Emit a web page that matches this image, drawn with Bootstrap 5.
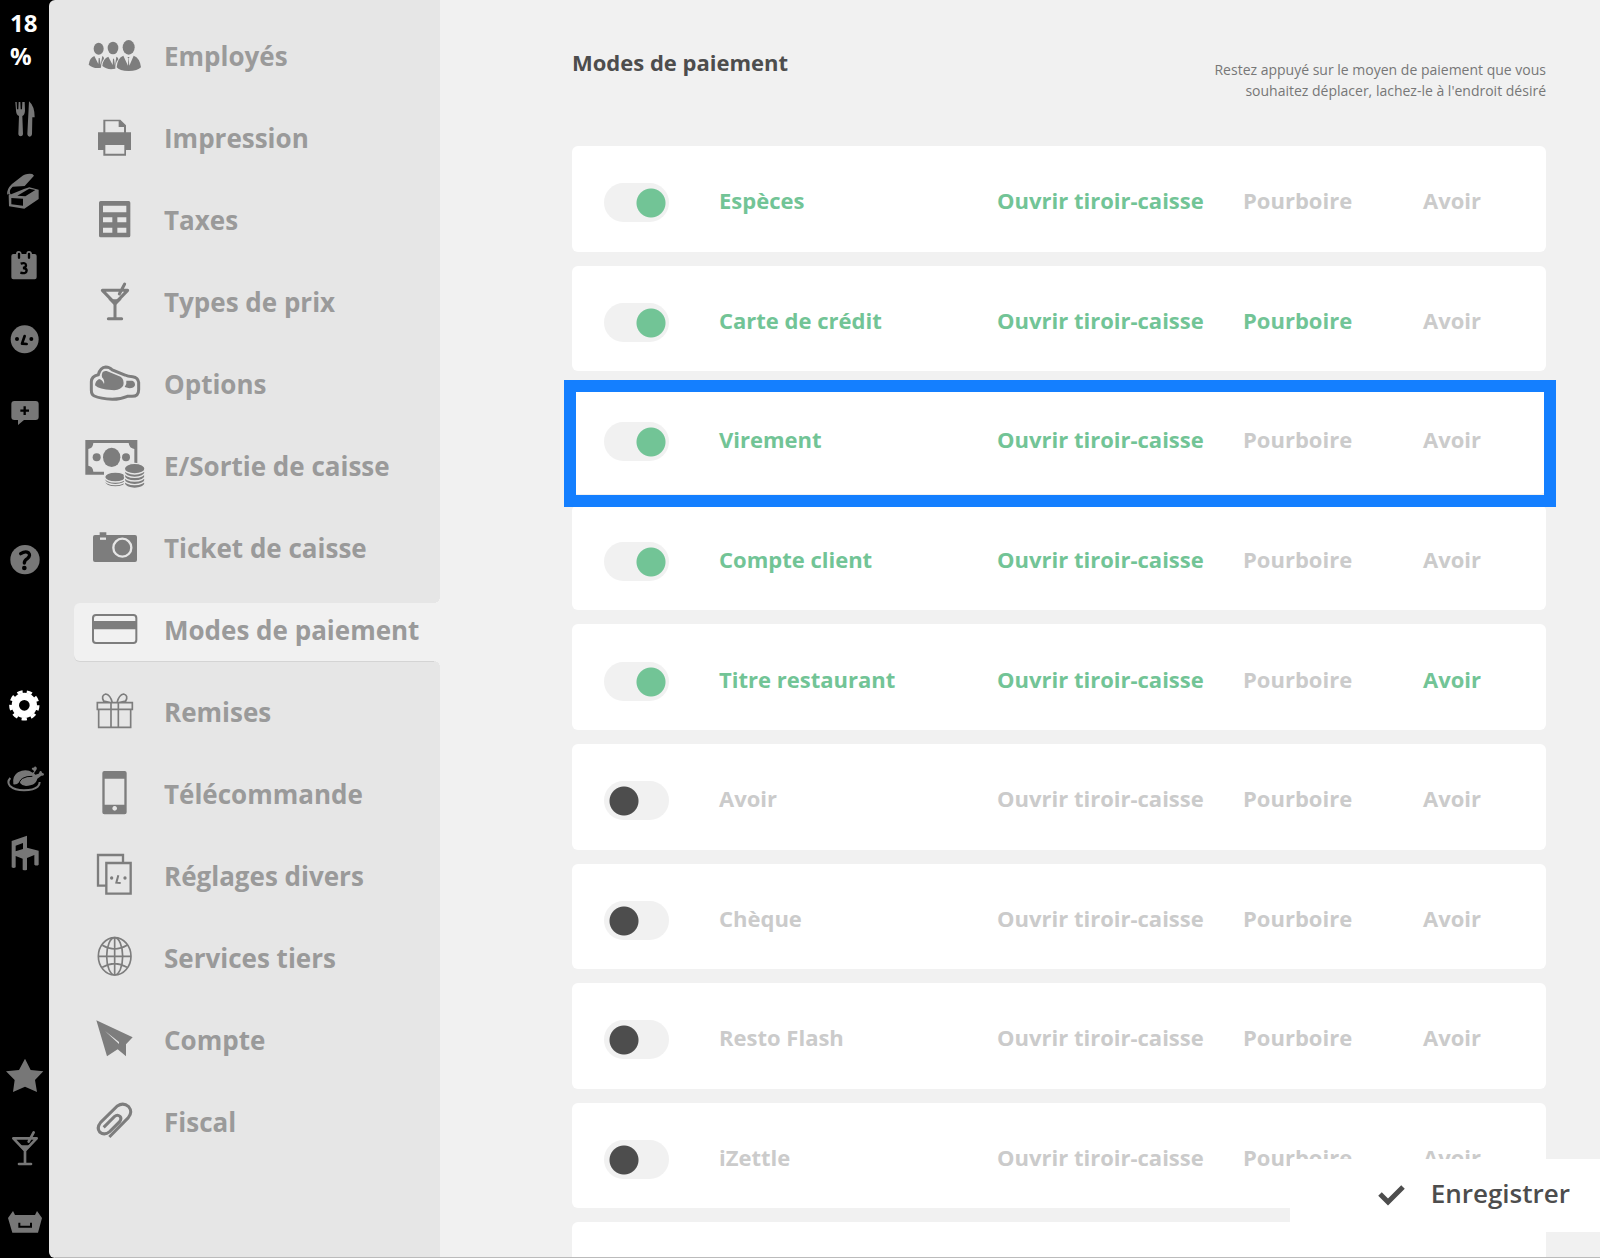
<!DOCTYPE html>
<html lang="fr">
<head>
<meta charset="utf-8">
<meta name="viewport" content="width=device-width, initial-scale=1">
<title>Modes de paiement</title>
<link href="https://cdn.jsdelivr.net/npm/bootstrap@5.3.0/dist/css/bootstrap.min.css" rel="stylesheet">
<style>
  :root { --ink: #4d4d4d; --icon: #7d7d7d; --label: #9a9a9a; --panel: #e6e6e6; --page: #f1f1f1; --on: #72c496; --off: #cbcbcb; }
  body { font-family: "Open Sans", "Noto Sans", sans-serif; background: #000; color: var(--ink); }
  .rail { width: 49px; color: #777; }
  .rail a { color: inherit; }
  .rail-usage { height: 82px; padding: 6px 8px 0 10px; font-size: 24px; line-height: 33px; font-weight: 700; }
  .rail-main { height: 808px; }
  .rail-main > * { flex: 1 1 0; }
  .rail-foot > * { height: 73px; }
  .rail svg { width: 49px; height: 40px; fill: currentColor; }
  .side { width: 391px; background: var(--panel); padding: 29px 0 0 25px; border-radius: 6px 0 0 6px; }
  .side ul { gap: 24px; }
  .side a { height: 58px; padding-left: 11px; gap: 19px; color: var(--label); font-size: 26px; line-height: 36px; font-weight: 700; border-radius: 6px 0 0 6px; white-space: nowrap; }
  .side a span { padding-bottom: 4px; }
  .side svg { width: 60px; height: 58px; fill: var(--icon); stroke: none; color: var(--icon); }
  .side a.active { background: var(--page); box-shadow: 0 1px 0 #d4d4d4; position: relative; }
  .side a.active::before, .side a.active::after { content: ""; position: absolute; right: 0; width: 6px; height: 6px; }
  .side a.active::before { top: -6px; background: radial-gradient(circle at 0 0, var(--panel) 6px, var(--page) 6px); }
  .side a.active::after { bottom: -6px; background: radial-gradient(circle at 0 100%, var(--panel) 6px, var(--page) 6px); }
  .content-pane { background: var(--page); padding: 0 54px 0 132px; }
  .pane-head { height: 146px; padding-top: 47px; }
  .pane-head h1 { font-size: 22px; line-height: 30px; font-weight: 700; }
  .pane-head p { width: 352px; padding-top: 12px; font-size: 14px; line-height: 21px; color: #777; text-align: right; }
  .pay-list { height: 1182px; gap: 14px; }
  .pay-row { flex: 1 1 0; background: #fff; border-radius: 6px; padding: 8px 0 0 32px; position: relative; font-size: 22px; line-height: 30px; font-weight: 700; color: var(--off); }
  .pay-row .form-check { width: 115px; min-height: 0; padding: 0; margin: 0; }
  .pay-row .form-check-input { display: block; float: none; margin: 0; width: 65px; height: 39px; border: 0; border-radius: 20px; background: var(--page) radial-gradient(circle, var(--ink) 14px, transparent 15px) no-repeat 5px 5px / 30px 30px; }
  .pay-row .form-check-input:checked { background-color: var(--page); background-image: radial-gradient(circle, var(--on) 14px, transparent 15px); background-position: 32px 5px; }
  .pay-row label { padding-bottom: 5px; }
  .pay-row .btn { border: 0; padding: 0 0 5px; font: inherit; color: var(--off); text-align: left; white-space: nowrap; }
  .pay-row .is-on, .pay-row .btn.is-on { color: var(--on); }
  .opt-drawer { width: 246px; } .opt-tip { width: 180px; } .opt-credit { width: 123px; }
  .pay-row.picked { box-shadow: 0 3px 0 #fff; z-index: 1; }
  .picked-frame { position: absolute; inset: -5px -10px -16px -8px; border: 12px solid #147fff; pointer-events: none; }
  .save-btn { position: absolute; right: 0; bottom: 26px; z-index: 2; width: 310px; height: 73px; background: #fff; border: 0; border-radius: 0; padding: 0 30px 5px 0; gap: 24px; color: var(--ink); font-size: 26px; line-height: 36px; font-weight: 600; }
  .save-btn svg { margin-top: 4px; }
  .base-line { height: 1px; background: #bbb; left: 55px; }
</style>
</head>
<body>
<div class="d-flex vh-100 overflow-hidden position-relative">

  <nav class="rail d-flex flex-column flex-shrink-0" aria-label="Navigation principale">
    <div class="rail-usage text-white">18 %</div>
    <div class="rail-main d-flex flex-column">
      <a href="#" class="d-flex align-items-center" aria-label="Restaurant"><svg viewBox="0 296 147 120"><path d="M46 305h4l1 22h4l1-22h5l1 22h4l1-22h5l2 0 1 25q0 14-8 17l2 55q-1 6-7 6t-7-6l2-55q-9-3-9-17zM87 303q17 14 17 48h-7l-1 51q-1 7-7 7t-7-7z"/></svg></a>
      <a href="#" class="d-flex align-items-center" aria-label="Caisse"><svg viewBox="0 517 147 120"><path d="M35 554l28-22q14-12 34-9l5 5-28 31-36 2q-14 12-5 25l-1 5q-14-18 3-37z"/><path d="M24 584q-1-16 12-27" fill="none" stroke="currentColor" stroke-width="5"/><path d="M72 568l16-5 28 7v28l-43 29-46-7-1-33zm9 3-29 17 24 2 30-19-18-4zM34 595v19l35 4v-21z" fill-rule="evenodd"/></svg></a>
      <a href="#" class="d-flex align-items-center" aria-label="Calendrier"><svg viewBox="0 17 147 120"><path d="M40 41h8q0-9 8-9 8 0 9 9h14q0-9 8-9 8 0 9 9h8q6 0 6 6v64q0 6-6 6H40q-6 0-6-6V47q0-6 6-6z"/><path d="M57 41v11M87 41v11" stroke="#000" stroke-width="7" stroke-linecap="round"/><path d="M62 70q15-5 16 5 0 7-9 8 11 1 11 8-1 11-19 6" fill="none" stroke="#000" stroke-width="7"/></svg></a>
      <a href="#" class="d-flex align-items-center" aria-label="Clients"><svg viewBox="0 237 147 120"><circle cx="74" cy="298" r="42"/><g fill="#000"><circle cx="51" cy="297" r="6"/><circle cx="94" cy="297" r="6"/></g><path d="M74 288l-8 23 14 1" fill="none" stroke="#000" stroke-width="8" stroke-linecap="round" stroke-linejoin="round"/></svg></a>
      <a href="#" class="d-flex align-items-center" aria-label="Messages"><svg viewBox="0 458 147 120"><path d="M43 482h64q9 0 9 9v39q0 9-9 9H72l-18 15v-15H43q-9 0-9-9v-39q0-9 9-9z"/><path d="M74 498v26M61 511h26" stroke="#000" stroke-width="7"/></svg></a>
      <span></span>
      <a href="#" class="d-flex align-items-center" aria-label="Aide"><svg viewBox="0 358 147 120"><circle cx="75" cy="420" r="44"/><path d="M62 402q14-9 23-3 8 8-2 17-10 6-10 14" fill="none" stroke="#000" stroke-width="10" stroke-linecap="round"/><circle cx="73" cy="445" r="7" fill="#000"/></svg></a>
      <span></span>
      <a href="#" class="d-flex align-items-center text-white" aria-label="Réglages" aria-current="page"><svg viewBox="0 19 147 120"><circle cx="73" cy="77" r="27" fill="none" stroke="#fff" stroke-width="22"/><circle cx="73" cy="77" r="41" fill="none" stroke="#fff" stroke-width="9" stroke-dasharray="16 12.620" stroke-dashoffset="1"/></svg></a>
      <a href="#" class="d-flex align-items-center" aria-label="Plats"><svg viewBox="0 239 147 120"><path d="M40 312q-4-25 14-36 24-13 44 1l5-4-8-7q1-6 7-4 1-5 6-3 4 3 2 8l-8 12 4 4 10-3 4-8q6-1 6 5 7 1 6 6-2 4-8 3l-12 9q-3 15-21 20-22 6-30-6-2-3-2-5-8 10-19 8z"/><path d="M60 317q-6-14 8-23 12-7 29-6" fill="none" stroke="#000" stroke-width="3"/><path d="M31 293q-11 12-1 24 14 13 42 13 30-1 41-11 6-5 6-14" fill="none" stroke="currentColor" stroke-width="6"/></svg></a>
      <a href="#" class="d-flex align-items-center" aria-label="Tables"><svg viewBox="0 460 147 120"><path d="M35 484l46-16v36l35 9v42q-6 5-13 0v-29l-22 9v35q-6 4-13 0v-33l-21-8v34q-6 4-12 0zM47 498v17l22-7v-18z" fill-rule="evenodd"/></svg></a>
    </div>
    <div class="rail-foot d-flex flex-column mt-auto">
      <a href="#" class="d-flex align-items-center" aria-label="Favoris"><svg viewBox="0 406 147 120"><path d="M75 414l17 34 38 4-25 26 6 36-36-16-36 16 5-36-26-26 39-4z"/></svg></a>
      <a href="#" class="d-flex align-items-center" aria-label="Bar"><svg viewBox="0 625 147 120"><path d="M40 653h70L75 690zM75 690v38M57 730h36M86 663l15-28" fill="none" stroke="currentColor" stroke-width="8" stroke-linejoin="round" stroke-linecap="round"/><path d="M56 674h38l-19 20z"/></svg></a>
      <a href="#" class="d-flex align-items-center" aria-label="Tiroir"><svg viewBox="0 844 147 120"><path d="M39 871l6 12h60l6-12 15 21-12 44H37l-13-44z"/><path d="M58 906v12h35v-12" fill="none" stroke="#000" stroke-width="6"/></svg></a>
    </div>
  </nav>

  <nav class="side flex-shrink-0" aria-label="Réglages">
    <ul class="nav flex-column flex-nowrap">
      <li><a href="#" class="d-flex align-items-center text-decoration-none"><svg viewBox="255 87 180 174"><ellipse cx="296" cy="146" rx="15" ry="18"/><ellipse cx="339" cy="144" rx="16" ry="19"/><ellipse cx="386" cy="142" rx="18" ry="22"/><path d="M266 194q3-21 17-26l12 24 1-18 3 0 3 21 5-27q5 2 5 8-9 11-9 27-21 5-37-9z"/><path d="M307 198q2-23 18-28l13 25 1-19 3 0 3 21 4-27q6 2 6 8-10 11-9 28-24 5-39-8z"/><path d="M350 202q2-28 20-35l14 30 1-22-3-4h7l-3 4 2 22 13-30q19 7 22 35-10 11-37 11-28 0-36-11z"/></svg><span>Employés</span></a></li>
      <li><a href="#" class="d-flex align-items-center text-decoration-none"><svg viewBox="255 333 180 174"><path d="M310 359h51l17 17v21h15v53h-15v17h-68v-17h-16v-53h16zm6 5v33h56v-16h-16v-17zm0 71v26h57v-26z" fill-rule="evenodd"/></svg><span>Impression</span></a></li>
      <li><a href="#" class="d-flex align-items-center text-decoration-none"><svg viewBox="255 579 180 174"><path d="M302 603h84q5 0 5 5v99q0 5-5 5h-84q-5 0-5-5v-99q0-5 5-5zm7 14v20h70v-20zm0 35v15h28v-15zm43 0v15h27v-15zm-43 31v15h28v-15zm43 0v15h27v-15z" fill-rule="evenodd"/></svg><span>Taxes</span></a></li>
      <li><a href="#" class="d-flex align-items-center text-decoration-none"><svg viewBox="255 105 180 174"><path d="M307 151h76l-38 39zM345 190v44M325 236h40M358 162l16-30" fill="none" stroke="currentColor" stroke-width="9" stroke-linejoin="round" stroke-linecap="round"/><path d="M325 178h40l-20 20z"/></svg><span>Types de prix</span></a></li>
      <li><a href="#" class="d-flex align-items-center text-decoration-none"><svg viewBox="255 351 180 174"><path d="M274 425q0-16 21-21 6-22 22-23 12 0 20 9l38 15q8 4 23 5 16 2 18 17v22q0 20-20 20h-14q-20 9-45 9-36-2-54-10-9-4-9-18z" fill="none" stroke="currentColor" stroke-width="9"/><path d="M306 412Q303 390 320 393L362 410Q373 417 370 436 362 453 335 450 298 449 285 436 286 423 297 417 307 419 312 432 315 421 306 412zM379 422h18q9 4 8 14-3 9-17 9l-14-4q7-8 5-19z"/></svg><span>Options</span></a></li>
      <li><a href="#" class="d-flex align-items-center text-decoration-none"><svg viewBox="255 597 180 174"><path d="M256 600h156v70H312v34h-56z"/><path d="M265 627q14-2 15-18h106q2 16 17 18v46l-30 4-6 18h-87q-1-16-15-18z" fill="#e6e6e6"/><ellipse cx="335" cy="652" rx="26" ry="29"/><circle cx="290" cy="652" r="12"/><circle cx="378" cy="652" r="12"/><g stroke="#e6e6e6" stroke-width="4"><ellipse cx="346" cy="726" rx="32" ry="15"/><ellipse cx="346" cy="719" rx="32" ry="15"/><ellipse cx="346" cy="711" rx="32" ry="15"/><ellipse cx="404" cy="730" rx="31" ry="15"/><ellipse cx="404" cy="719" rx="31" ry="15"/><ellipse cx="404" cy="708" rx="31" ry="15"/><ellipse cx="404" cy="697" rx="31" ry="15"/><ellipse cx="404" cy="686" rx="31" ry="16"/></g></svg><span>E/Sortie de caisse</span></a></li>
      <li><a href="#" class="d-flex align-items-center text-decoration-none"><svg viewBox="255 303 180 174"><path d="M285 345h14v-8h20v8h86q6 0 6 6v69q0 6-6 6H285q-6 0-6-6v-69q0-6 6-6z"/><path d="M300 356h18" stroke="#e6e6e6" stroke-width="7"/><circle cx="367" cy="383" r="27" fill="none" stroke="#e6e6e6" stroke-width="7"/></svg><span>Ticket de caisse</span></a></li>
      <li><a href="#" class="d-flex align-items-center text-decoration-none active" aria-current="page"><svg viewBox="255 549 180 174"><rect x="279" y="585" width="130" height="84" rx="9" fill="none" stroke="currentColor" stroke-width="6"/><path d="M278 603h131v25H278z"/></svg><span>Modes de paiement</span></a></li>
      <li><a href="#" class="d-flex align-items-center text-decoration-none"><svg viewBox="255 15 180 174"><path d="M292 68h105v20H292zM296 88v54h96V88M333 68v74M355 68v74M331 68l-20-5q-9-17 6-21 14 2 20 26M357 68l20-5q9-17-6-21-14 2-20 26" fill="none" stroke="currentColor" stroke-width="5"/></svg><span>Remises</span></a></li>
      <li><a href="#" class="d-flex align-items-center text-decoration-none"><svg viewBox="255 261 180 174"><path d="M313 273h61q6 0 6 6v118q0 6-6 6h-61q-6 0-6-6V279q0-6 6-6zm1 23v78h59v-78zm30 82a7 7 0 1 0 .1 0z" fill-rule="evenodd"/></svg><span>Télécommande</span></a></li>
      <li><a href="#" class="d-flex align-items-center text-decoration-none"><svg viewBox="255 507 180 174"><path d="M317 617h-23v-92h75v23M319 549h73v92h-73z" fill="none" stroke="currentColor" stroke-width="7"/><circle cx="335" cy="594" r="5"/><circle cx="375" cy="594" r="5"/><path d="M355 586l-6 22 13 1" fill="none" stroke="currentColor" stroke-width="6"/></svg><span>Réglages divers</span></a></li>
      <li><a href="#" class="d-flex align-items-center text-decoration-none"><svg viewBox="255 33 180 174"><g fill="none" stroke="currentColor" stroke-width="5"><ellipse cx="344" cy="109" rx="49" ry="56"/><ellipse cx="344" cy="109" rx="24" ry="56"/><path d="M344 53v112M295 109h98M307 76q37 22 74 0M307 142q37-22 74 0"/></g></svg><span>Services tiers</span></a></li>
      <li><a href="#" class="d-flex align-items-center text-decoration-none"><svg viewBox="255 279 180 174"><path d="M289 301l109 51-20 21v36l-25-21-32 21z"/><path d="M315 333l42 33v6z" fill="#e6e6e6"/></svg><span>Compte</span></a></li>
      <li><a href="#" class="d-flex align-items-center text-decoration-none"><svg viewBox="255 525 180 174"><path d="M328 651l57-58q14-17 1-33-16-14-34-2l-50 49q-13 16-3 29 14 12 30-1l30-30q7-10 1-16-8-7-17 1l-32 32" fill="none" stroke="currentColor" stroke-width="9"/></svg><span>Fiscal</span></a></li>
    </ul>
  </nav>

  <main class="content-pane flex-grow-1">
    <header class="pane-head d-flex justify-content-between align-items-start">
      <h1 class="m-0">Modes de paiement</h1>
      <p class="m-0">Restez appuyé sur le moyen de paiement que vous souhaitez déplacer, lachez-le à l'endroit désiré</p>
    </header>
    <div class="pay-list d-flex flex-column">
      <div class="pay-row d-flex align-items-center"><div class="form-check form-switch"><input class="form-check-input" type="checkbox" role="switch" id="m1" checked></div><label class="flex-grow-1 is-on" for="m1">Espèces</label><button type="button" class="btn opt-drawer is-on">Ouvrir tiroir-caisse</button><button type="button" class="btn opt-tip">Pourboire</button><button type="button" class="btn opt-credit">Avoir</button></div>
      <div class="pay-row d-flex align-items-center"><div class="form-check form-switch"><input class="form-check-input" type="checkbox" role="switch" id="m2" checked></div><label class="flex-grow-1 is-on" for="m2">Carte de crédit</label><button type="button" class="btn opt-drawer is-on">Ouvrir tiroir-caisse</button><button type="button" class="btn opt-tip is-on">Pourboire</button><button type="button" class="btn opt-credit">Avoir</button></div>
      <div class="pay-row picked d-flex align-items-center"><div class="form-check form-switch"><input class="form-check-input" type="checkbox" role="switch" id="m3" checked></div><label class="flex-grow-1 is-on" for="m3">Virement</label><button type="button" class="btn opt-drawer is-on">Ouvrir tiroir-caisse</button><button type="button" class="btn opt-tip">Pourboire</button><button type="button" class="btn opt-credit">Avoir</button><div class="picked-frame"></div></div>
      <div class="pay-row d-flex align-items-center"><div class="form-check form-switch"><input class="form-check-input" type="checkbox" role="switch" id="m4" checked></div><label class="flex-grow-1 is-on" for="m4">Compte client</label><button type="button" class="btn opt-drawer is-on">Ouvrir tiroir-caisse</button><button type="button" class="btn opt-tip">Pourboire</button><button type="button" class="btn opt-credit">Avoir</button></div>
      <div class="pay-row d-flex align-items-center"><div class="form-check form-switch"><input class="form-check-input" type="checkbox" role="switch" id="m5" checked></div><label class="flex-grow-1 is-on" for="m5">Titre restaurant</label><button type="button" class="btn opt-drawer is-on">Ouvrir tiroir-caisse</button><button type="button" class="btn opt-tip">Pourboire</button><button type="button" class="btn opt-credit is-on">Avoir</button></div>
      <div class="pay-row d-flex align-items-center"><div class="form-check form-switch"><input class="form-check-input" type="checkbox" role="switch" id="m6"></div><label class="flex-grow-1" for="m6">Avoir</label><button type="button" class="btn opt-drawer">Ouvrir tiroir-caisse</button><button type="button" class="btn opt-tip">Pourboire</button><button type="button" class="btn opt-credit">Avoir</button></div>
      <div class="pay-row d-flex align-items-center"><div class="form-check form-switch"><input class="form-check-input" type="checkbox" role="switch" id="m7"></div><label class="flex-grow-1" for="m7">Chèque</label><button type="button" class="btn opt-drawer">Ouvrir tiroir-caisse</button><button type="button" class="btn opt-tip">Pourboire</button><button type="button" class="btn opt-credit">Avoir</button></div>
      <div class="pay-row d-flex align-items-center"><div class="form-check form-switch"><input class="form-check-input" type="checkbox" role="switch" id="m8"></div><label class="flex-grow-1" for="m8">Resto Flash</label><button type="button" class="btn opt-drawer">Ouvrir tiroir-caisse</button><button type="button" class="btn opt-tip">Pourboire</button><button type="button" class="btn opt-credit">Avoir</button></div>
      <div class="pay-row d-flex align-items-center"><div class="form-check form-switch"><input class="form-check-input" type="checkbox" role="switch" id="m9"></div><label class="flex-grow-1" for="m9">iZettle</label><button type="button" class="btn opt-drawer">Ouvrir tiroir-caisse</button><button type="button" class="btn opt-tip">Pourboire</button><button type="button" class="btn opt-credit">Avoir</button></div>
      <div class="pay-row"></div>
    </div>
  </main>

  <button type="button" class="save-btn d-flex align-items-center justify-content-end"><svg width="30" height="24" viewBox="0 0 30 24"><path d="M3 11l8 8L26 4" fill="none" stroke="currentColor" stroke-width="5"/></svg>Enregistrer</button>
  <div class="base-line position-absolute bottom-0 end-0"></div>
</div>
<script src="https://cdn.jsdelivr.net/npm/bootstrap@5.3.0/dist/js/bootstrap.bundle.min.js"></script>
</body>
</html>
